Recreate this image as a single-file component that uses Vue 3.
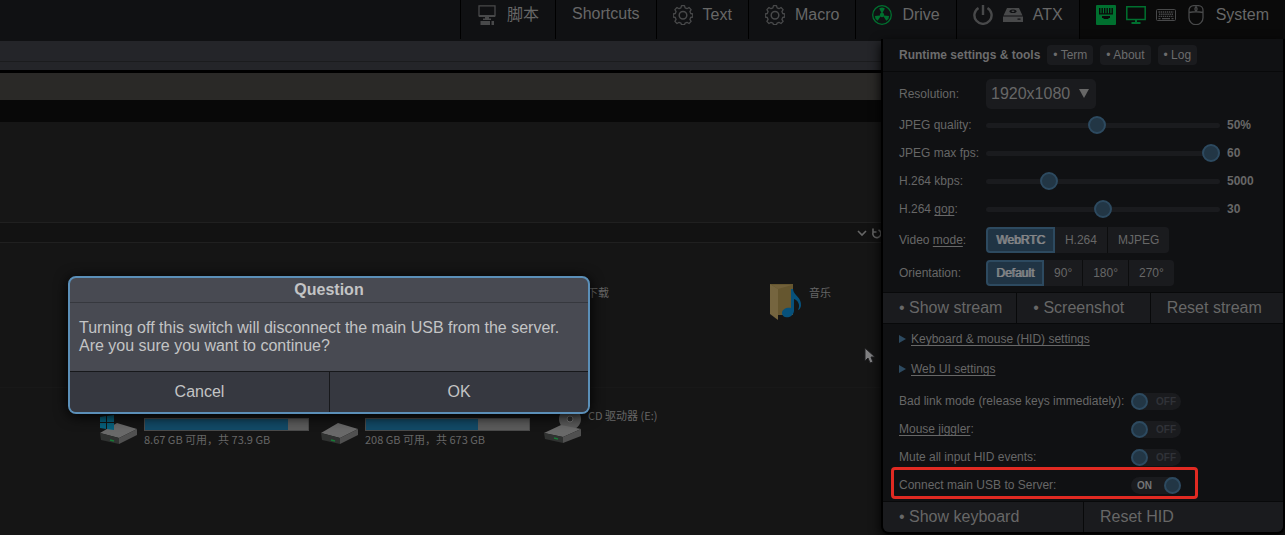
<script setup>
import { ref } from 'vue'

const sliders = ref([
  { id: 'quality', label: 'JPEG quality:', min: 5, max: 100, step: 5, value: 50, text: '50%' },
  { id: 'fps', label: 'JPEG max fps:', min: 0, max: 60, step: 1, value: 60, text: '60' },
  { id: 'kbps', label: 'H.264 kbps:', min: 25, max: 20000, step: 25, value: 5000, text: '5000' },
  { id: 'gop', label: 'H.264 ', link: 'gop', min: 0, max: 60, step: 1, value: 30, text: '30' }
])
const modes = ['WebRTC', 'H.264', 'MJPEG']
const angles = ['Default', '90°', '180°', '270°']
const mode = ref('WebRTC')
const angle = ref('Default')
const switches = ref([
  { id: 'badlink', label: 'Bad link mode (release keys immediately):', on: false },
  { id: 'jiggler', link: 'Mouse jiggler', on: false },
  { id: 'mute', label: 'Mute all input HID events:', on: false },
  { id: 'usb', label: 'Connect main USB to Server:', on: true, marked: true }
])
const disks = [
  { name: 'c', text: '8.67 GB 可用，共 73.9 GB', used: 88 },
  { name: 'd', text: '208 GB 可用，共 673 GB', used: 69 }
]
</script>

<template>
  <div class="page">
    <nav class="navbar">
      <button class="item">
        <svg class="icon" viewBox="0 0 20 20" fill="none" stroke="currentColor">
          <path d="M2 .8h16v10H2z" stroke-width="1.300" />
          <path d="M2 11h16" stroke-width="2" />
          <path d="M8 12h4v1.500h2v1.500H6v-1.500h2zM3.500 16H13v4H3.500zM14.500 16h2.500v4h-2.500z" fill="currentColor" stroke="none" />
        </svg>
        <span>脚本</span>
      </button>
      <button class="item"><span class="plain">Shortcuts</span></button>
      <button v-for="name in ['Text', 'Macro']" :key="name" class="item">
        <svg class="icon" viewBox="0 0 20 20" fill="none" stroke="currentColor">
          <path stroke-width="1.300" stroke-linejoin="round" d="M8.500.7h3l.6 2.200 1.900.8 2-1.200 2.100 2.100-1.200 2 .8 1.900 2.100.5v3l-2.100.5-.8 1.900 1.200 2-2.100 2.100-2-1.200-1.900.8-.6 1.600h-3l-.6-1.600-1.900-.8-2 1.200-2.100-2.100 1.200-2-.8-1.900-2.100-.5V9l2.100-.5.800-1.900-1.200-2L4 2.500l2 1.200 1.900-.8z" />
          <circle cx="10" cy="10.300" r="3.800" stroke-width="1.500" />
        </svg>
        <span>{{ name }}</span>
      </button>
      <button class="item">
        <svg class="icon green" viewBox="0 0 20 20" fill="none" stroke="currentColor">
          <circle cx="10" cy="10" r="9.300" stroke-width="1.300" />
          <g fill="currentColor" stroke="none">
            <circle cx="10" cy="10" r="2.200" />
            <path v-for="a in [0, 120, 240]" :key="a" :transform="`rotate(${a} 10 10)`" d="M9.500 8L7.200 3.400Q10 1.800 12.800 3.400L10.500 8z" />
          </g>
        </svg>
        <span>Drive</span>
      </button>
      <button class="item">
        <svg class="icon" viewBox="0 0 20 20" fill="none" stroke="currentColor" stroke-width="2.400">
          <path d="M5.500 2.900a8.600 8.600 0 1 0 9 0M10 0v10" />
        </svg>
        <svg class="icon" viewBox="0 0 20 20">
          <path fill="currentColor" fill-rule="evenodd" d="M4 3h12l3.500 7.500H.5zM10 4.500a3.600 1.800 0 1 0 .01 0zM10 5.500a1.500.7 0 1 1-.01 0zM0 11.500h20V17H0zM14.500 13.500v1.200h3v-1.200z" />
        </svg>
        <span>ATX</span>
      </button>
      <button class="item active">
        <svg class="icon green" viewBox="0 0 20 20">
          <rect width="20" height="20" rx="1" fill="currentColor" />
          <path class="cut" d="M3 3h1.400v6H3zM5.500 3h1.400v6H5.500zM8 3h1.400v6H8zM10.500 3h1.400v6h-1.400zM13 3h1.400v6H13zM15.500 3h1.400v6h-1.400zM3 8.200h13.900v1.200H3zM6 11h8v2h-1.500v1h-5v-1H6z" />
        </svg>
        <svg class="icon green" viewBox="0 0 20 20" fill="none" stroke="currentColor">
          <path d="M.8 1.800h18.400v12.700H.8z" stroke-width="1.500" />
          <path d="M10 15v2.500M5.500 18h9" stroke-width="2" />
        </svg>
        <svg class="icon" viewBox="0 0 20 20" fill="none" stroke="currentColor">
          <rect x=".5" y="4.500" width="19" height="11" rx="1" />
          <path d="M2.500 7h15M3 9.200h14M2.500 11.400h15" stroke-dasharray="1.400 .7" stroke-width="1.400" />
          <path d="M2.500 13.600h2M6 13.600h8M15.500 13.600h2" stroke-width="1.100" />
        </svg>
        <svg class="icon" viewBox="0 0 20 20" fill="none" stroke="currentColor" stroke-width="1.300">
          <path d="M7.500.7h5a4.500 4.500 0 0 1 4.500 4.500v7.500a7 7 0 0 1-14 0V5.200A4.500 4.500 0 0 1 7.500.7zM3 7.500q7-1.500 14 0M10 .7v2M10 5.500v1.500" />
          <rect x="9" y="2.500" width="2" height="3" rx="1" />
        </svg>
        <span>System</span>
      </button>
    </nav>

    <main class="stream">
      <div class="titlebar"></div>
      <div class="statusbar"></div>
      <div class="tabs"></div>
      <div class="menubar"></div>
      <div class="ribbon"></div>
      <div class="address">
        <svg class="address-icons" viewBox="0 0 26 12" fill="none" stroke="currentColor" stroke-width="1.600">
          <path d="M2 4l4 4 4-4M17 1.500v3.500h3.500M17.500 4.500a4 4 0 1 0 5-1.500" />
        </svg>
      </div>
      <div class="folders"></div>
      <div class="devices"></div>

      <span class="caption download">下载</span>
      <svg class="folder" viewBox="0 0 34 38">
        <path fill="#65562f" d="M1 1h23v31H8z" />
        <path fill="#75653f" d="M1 1l8 5v31l-8-6z" />
        <path fill="#71603a" d="M3 2h20l-14 4z" />
        <path fill="#07517b" d="M22 6h2c0 6 9 8 8 17-1 3-2 4-3 4 3-6-1-10-4-11v12c-1 8-12 8-12 2 0-4 5-6 9-5z" />
      </svg>
      <span class="caption music">音乐</span>

      <div v-for="d in disks" :key="d.name" class="disk" :class="d.name">
        <svg class="drive" viewBox="0 0 38 29">
          <path fill="#696969" d="M0 18L17 8l20 6-18 9z" />
          <path fill="#303231" d="M0 18l19 5v6L1 25z" />
          <path fill="#505050" d="M19 23l18-9v6l-18 9z" />
          <path stroke="#187a36" stroke-width="1.500" d="M10 25l4 1" />
          <path v-if="d.name === 'c'" fill="#07617d" d="M0 2l6-1v6H0zM7 1l7-1v7H7zM0 8h6v6l-6-1zM7 8h7v7l-7-1z" />
        </svg>
        <div class="usage">
          <div class="bar"><div class="used" :style="{ width: d.used + '%' }"></div></div>
          <span>{{ d.text }}</span>
        </div>
      </div>
      <svg class="cd" viewBox="0 0 38 36">
        <circle cx="26" cy="11" r="11" fill="#5a5a5a" />
        <circle cx="26" cy="11" r="3" fill="#333" stroke="#777" />
        <path fill="#696969" d="M0 25l17-8 20 4-18 8z" />
        <path fill="#303231" d="M0 25l19 4v6L1 31z" />
        <path fill="#505050" d="M19 29l18-8v7l-18 7z" />
        <path stroke="#187a36" stroke-width="1.500" d="M10 30l4 1" />
      </svg>
      <span class="caption cdname">CD 驱动器 (E:)</span>
      <svg class="cursor" viewBox="0 0 12 17">
        <path fill="#808082" stroke="#202022" d="M1 1v13l3-3 2 5 3-1-2-5h4z" />
      </svg>
    </main>

    <section class="panel">
      <header class="panel-head">
        <b>Runtime settings &amp; tools</b>
        <button class="small">• Term</button>
        <button class="small">• About</button>
        <button class="small">• Log</button>
      </header>

      <div class="settings">
        <div class="row tall">
          <label for="resolution">Resolution:</label>
          <div class="select">
            <select id="resolution"><option>1920x1080</option></select>
            <svg viewBox="0 0 10 9"><path fill="currentColor" d="M0 0h10L5 9z" /></svg>
          </div>
        </div>
        <div v-for="s in sliders" :key="s.id" class="row">
          <label :for="s.id">{{ s.label }}<template v-if="s.link"><u>{{ s.link }}</u>:</template></label>
          <input :id="s.id" v-model="s.value" type="range" :min="s.min" :max="s.max" :step="s.step">
          <b class="value">{{ s.text }}</b>
        </div>
        <div class="row mid">
          <span>Video <u>mode</u>:</span>
          <div class="group">
            <button v-for="m in modes" :key="m" :class="{ on: mode === m }" @click="mode = m">{{ m }}</button>
          </div>
        </div>
        <div class="row mid">
          <span>Orientation:</span>
          <div class="group">
            <button v-for="a in angles" :key="a" :class="{ on: angle === a }" @click="angle = a">{{ a }}</button>
          </div>
        </div>
      </div>

      <div class="actions">
        <button>• Show stream</button>
        <button>• Screenshot</button>
        <button>Reset stream</button>
      </div>

      <div class="more">
        <details><summary><svg viewBox="0 0 7 8"><path d="M0 0l7 4-7 4z" fill="currentColor" /></svg><u>Keyboard &amp; mouse (HID) settings</u></summary></details>
        <details><summary><svg viewBox="0 0 7 8"><path d="M0 0l7 4-7 4z" fill="currentColor" /></svg><u>Web UI settings</u></summary></details>
        <div v-for="s in switches" :key="s.id" class="switch-row" :class="{ marked: s.marked }">
          <label :for="s.id">{{ s.label }}<template v-if="s.link"><u>{{ s.link }}</u>:</template></label>
          <div class="switch" :class="{ on: s.on }">
            <input :id="s.id" v-model="s.on" type="checkbox">
            <span>{{ s.on ? 'ON' : 'OFF' }}</span>
          </div>
        </div>
      </div>

      <div class="actions last">
        <button>• Show keyboard</button>
        <button>Reset HID</button>
      </div>
    </section>

    <div class="modal" role="dialog" aria-labelledby="question">
      <h2 id="question">Question</h2>
      <p>Turning off this switch will disconnect the main USB from the server.<br>Are you sure you want to continue?</p>
      <div class="choices">
        <button>Cancel</button>
        <button>OK</button>
      </div>
    </div>
  </div>
</template>

<style>
body {
  background: #151515;
}
</style>

<style scoped>
* {
  box-sizing: border-box;
}
button,
select,
input {
  margin: 0;
  border: 0;
  padding: 0;
  color: inherit;
  font: inherit;
}
u {
  text-underline-offset: 2px;
}
.page {
  position: relative;
  display: flex;
  flex-direction: column;
  min-height: 100vh;
  overflow: hidden;
  background: #151515;
  color: #676767;
  font: 12px/14px "Liberation Sans", "Noto Sans CJK SC", sans-serif;
}
.navbar {
  display: flex;
  justify-content: flex-end;
  height: 41px;
  background: #101113;
  font-size: 16px;
}
.item {
  display: flex;
  gap: 10px;
  height: 39px;
  padding: 5px 16px 0;
  border-left: 1px solid #000;
  background: none;
  line-height: 20px;
  white-space: nowrap;
}
.item.active {
  background: #0a0a0a;
}
.item .plain {
  margin-top: -1px;
}
.icon {
  flex: none;
  width: 20px;
  height: 20px;
  color: #48494a;
}
.icon.green {
  color: #00702f;
}
.cut {
  fill: #0a0a0a;
}
.stream {
  position: relative;
  flex: 1;
  display: flex;
  flex-direction: column;
  color: #666;
  font: 11px/16px "Noto Sans CJK SC", sans-serif;
}
.titlebar {
  height: 21px;
  border-bottom: 1px solid #1b1c1e;
  background: #242529;
}
.statusbar {
  height: 8px;
  background: #242529;
}
.tabs {
  height: 30px;
  border-top: 3px solid #000;
  background: #2a2927;
}
.menubar {
  height: 22px;
  background: #080808;
}
.ribbon {
  height: 100px;
  background: #161616;
}
.address {
  display: flex;
  align-items: center;
  height: 21px;
  padding-left: 856px;
  border: solid #202020;
  border-width: 1px 0;
  background: #121212;
}
.address-icons {
  width: 26px;
  height: 12px;
}
.folders {
  height: 144px;
}
.devices {
  flex: 1;
  border-top: 1px solid #181818;
}
.caption,
.folder,
.disk,
.cd,
.cursor {
  position: absolute;
  white-space: nowrap;
}
.download {
  left: 587px;
  top: 243px;
}
.folder {
  left: 769px;
  top: 242px;
  width: 34px;
  height: 38px;
}
.music {
  left: 809px;
  top: 243px;
}
.disk {
  top: 374px;
  display: flex;
  gap: 6px;
}
.disk.c {
  left: 100px;
}
.disk.d {
  left: 321px;
}
.drive {
  width: 38px;
  height: 29px;
}
.usage {
  width: 165px;
  padding-top: 3px;
}
.bar {
  height: 13px;
  border: 1px solid #4a4a4a;
  background: #5c5c5c;
}
.used {
  height: 100%;
  background: #124a67;
}
.cd {
  left: 544px;
  top: 367px;
  width: 38px;
  height: 36px;
}
.cdname {
  left: 588px;
  top: 366px;
}
.cursor {
  left: 864px;
  top: 306px;
  width: 12px;
  height: 17px;
}
.panel {
  position: absolute;
  top: 39px;
  right: 0;
  width: 404px;
  border: solid #000;
  border-width: 0 2px 2px;
  border-radius: 0 0 8px 8px;
  background: #101113;
  box-shadow: 0 4px 12px #000;
  overflow: hidden;
}
.panel-head {
  display: flex;
  align-items: center;
  gap: 7px;
  height: 33px;
  padding: 0 16px;
  border-bottom: 1px solid #08090a;
  color: #6c6c6d;
}
.small {
  height: 20px;
  padding: 0 6px;
  border-radius: 4px;
  background: #1a1b1e;
}
.settings {
  padding: 4px 16px 3px;
}
.row {
  display: grid;
  grid-template-columns: 87px 234px 1fr;
  align-items: center;
  height: 28px;
}
.row.tall {
  height: 35px;
}
.row.mid {
  height: 33px;
}
.select {
  position: relative;
  width: 110px;
}
.select select {
  display: block;
  width: 100%;
  height: 30px;
  padding-left: 5px;
  border-radius: 5px;
  appearance: none;
  background: #1a1b1e;
  font-size: 16px;
}
.select svg {
  position: absolute;
  top: 10px;
  right: 7px;
  width: 10px;
  height: 9px;
}
.row input {
  width: 100%;
  height: 18px;
  appearance: none;
  background: none;
}
.row input::-webkit-slider-runnable-track {
  height: 5px;
  border-radius: 3px;
  background: #1a1b1e;
}
.row input::-webkit-slider-thumb {
  width: 18px;
  height: 18px;
  margin-top: -7px;
  border: 2px solid #2d4a60;
  border-radius: 50%;
  appearance: none;
  background: #223645;
}
.value {
  padding-left: 7px;
}
.group {
  display: flex;
}
.group button {
  height: 26px;
  padding: 0 10px;
  border-right: 1px solid #0c0d0e;
  background: #1a1b1e;
}
.group button:first-child {
  border-radius: 4px 0 0 4px;
}
.group button:last-child {
  border-right: 0;
  border-radius: 0 4px 4px 0;
}
.group .on {
  padding: 0 8px;
  border: 2px solid #2d4a60;
  background: #203444;
  color: #858688;
  text-shadow: 1px 0 0 #858688;
}
.actions {
  display: grid;
  grid-template-columns: repeat(3, 1fr);
  border: solid #08090a;
  border-width: 1px 0;
  font-size: 16px;
}
.actions.last {
  grid-template-columns: repeat(2, 1fr);
  border-bottom: 0;
}
.actions button {
  height: 30px;
  padding-left: 16px;
  background: #1a1b1e;
  text-align: left;
  white-space: nowrap;
}
.actions button + button {
  border-left: 1px solid #08090a;
}
.more {
  padding: 0 16px 2px;
}
summary {
  display: flex;
  align-items: center;
  gap: 5px;
  height: 30px;
  list-style: none;
}
summary svg {
  width: 7px;
  height: 8px;
  color: #2d4a60;
}
.switch-row {
  position: relative;
  display: grid;
  grid-template-columns: 232px 50px;
  align-items: center;
  height: 28px;
}
details + .switch-row {
  margin-top: 3px;
}
.marked::after {
  content: "";
  position: absolute;
  inset: -4px 69px 0 -8px;
  border: 3px solid #e12a22;
  border-radius: 4px;
  pointer-events: none;
}
.switch {
  position: relative;
  height: 17px;
  color: #303238;
  font: bold 10px/18px "Liberation Sans", sans-serif;
}
.switch input {
  display: block;
  width: 50px;
  height: 17px;
  border-radius: 9px;
  appearance: none;
  background: #1a1b1e;
}
.switch input::before {
  content: "";
  display: block;
  box-sizing: border-box;
  width: 17px;
  height: 17px;
  border: 2px solid #2d4a60;
  border-radius: 50%;
  background: #223645;
}
.switch.on input::before {
  margin-left: 33px;
}
.switch span {
  position: absolute;
  top: 0;
  right: 5px;
  pointer-events: none;
}
.switch.on {
  color: #747577;
}
.switch.on span {
  right: auto;
  left: 6px;
}
.modal {
  position: absolute;
  top: 276px;
  left: 68px;
  width: 522px;
  border: 2px solid #5b8fb8;
  border-radius: 8px;
  background: #484a52;
  box-shadow: 0 2px 14px #000;
  color: #c3c4c5;
  font-size: 16px;
  line-height: 18px;
  overflow: hidden;
}
.modal h2 {
  margin: 0;
  padding: 3px 0;
  border-bottom: 1px solid #36383e;
  font-size: 16px;
  text-align: center;
}
.modal p {
  margin: 0;
  padding: 16px 9px;
}
.choices {
  display: grid;
  grid-template-columns: 1fr 1fr;
  border-top: 1px solid #17181b;
}
.choices button {
  height: 40px;
  background: #363840;
}
.choices button + button {
  border-left: 1px solid #17181b;
}
</style>
